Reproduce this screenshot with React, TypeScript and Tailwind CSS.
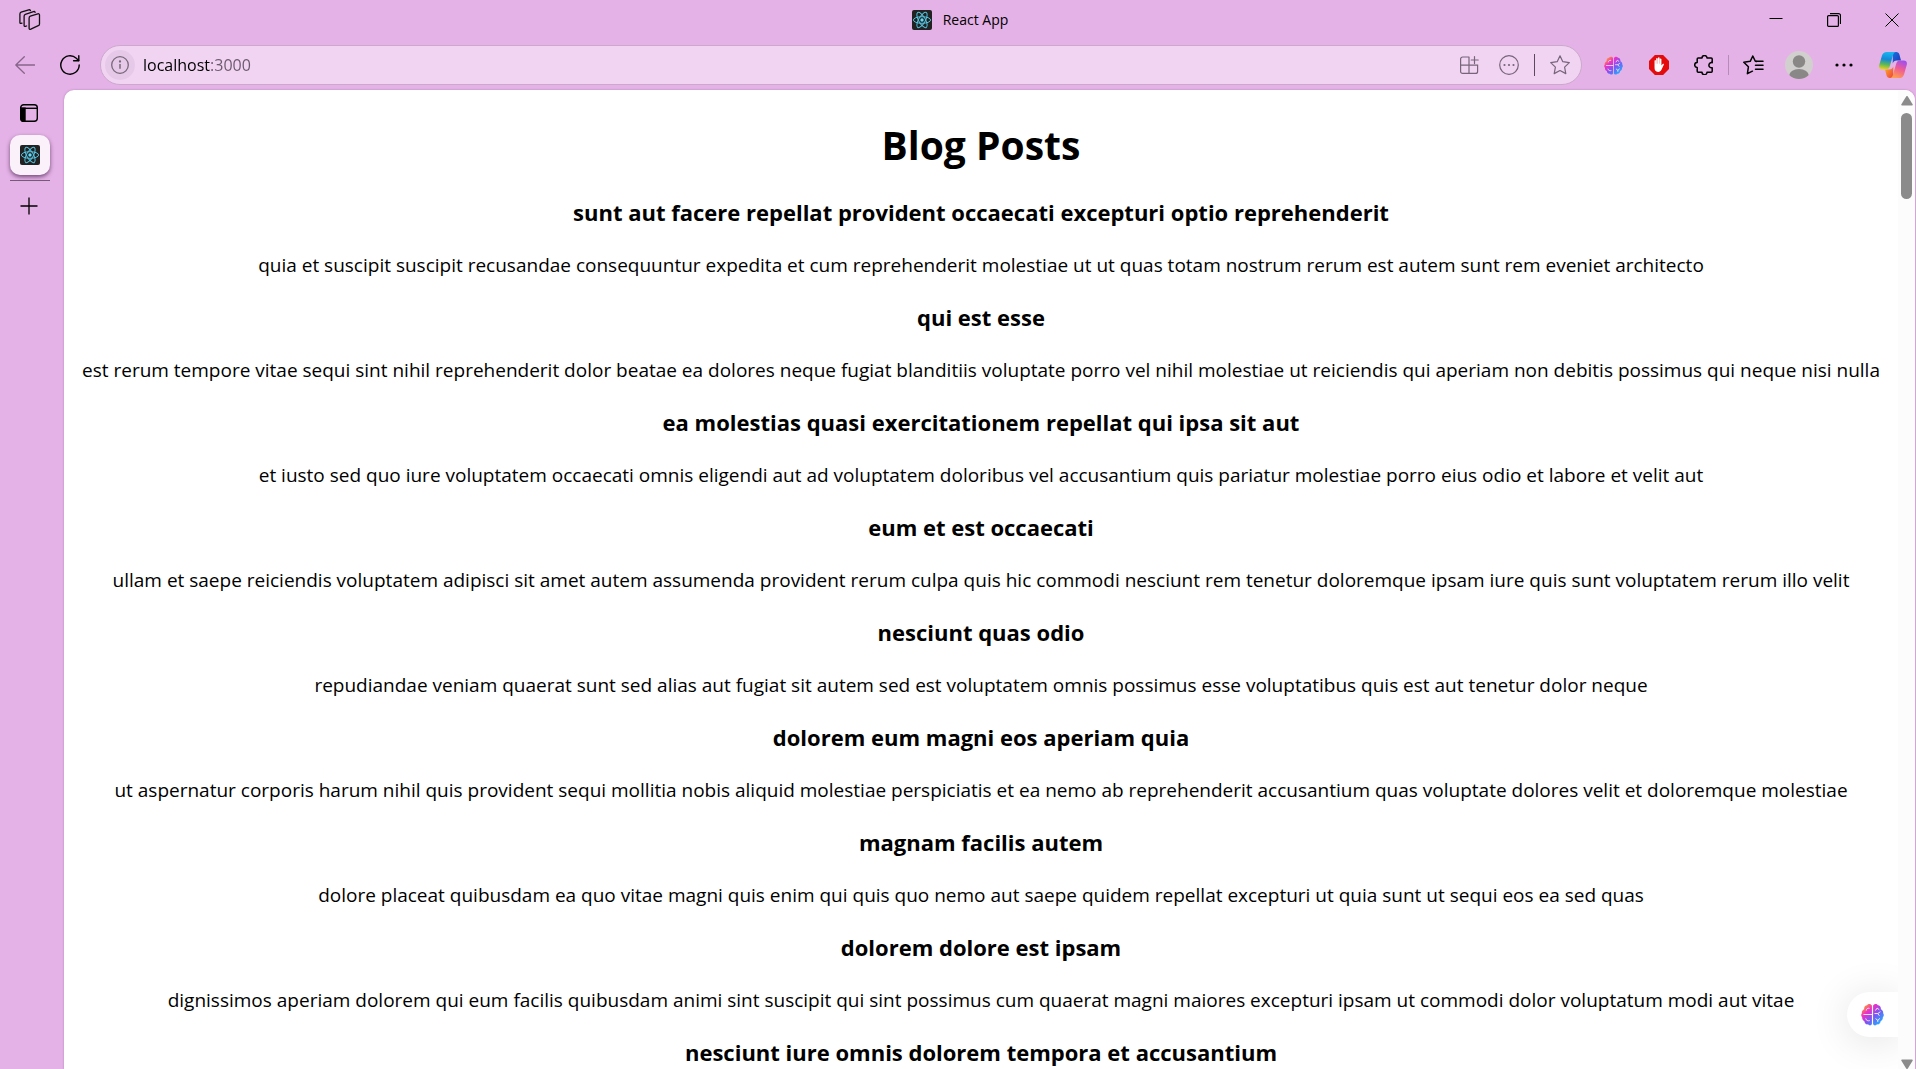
import React from "react";

const posts = [
  { title: "sunt aut facere repellat provident occaecati excepturi optio reprehenderit", body: "quia et suscipit suscipit recusandae consequuntur expedita et cum reprehenderit molestiae ut ut quas totam nostrum rerum est autem sunt rem eveniet architecto" },
  { title: "qui est esse", body: "est rerum tempore vitae sequi sint nihil reprehenderit dolor beatae ea dolores neque fugiat blanditiis voluptate porro vel nihil molestiae ut reiciendis qui aperiam non debitis possimus qui neque nisi nulla" },
  { title: "ea molestias quasi exercitationem repellat qui ipsa sit aut", body: "et iusto sed quo iure voluptatem occaecati omnis eligendi aut ad voluptatem doloribus vel accusantium quis pariatur molestiae porro eius odio et labore et velit aut" },
  { title: "eum et est occaecati", body: "ullam et saepe reiciendis voluptatem adipisci sit amet autem assumenda provident rerum culpa quis hic commodi nesciunt rem tenetur doloremque ipsam iure quis sunt voluptatem rerum illo velit" },
  { title: "nesciunt quas odio", body: "repudiandae veniam quaerat sunt sed alias aut fugiat sit autem sed est voluptatem omnis possimus esse voluptatibus quis est aut tenetur dolor neque" },
  { title: "dolorem eum magni eos aperiam quia", body: "ut aspernatur corporis harum nihil quis provident sequi mollitia nobis aliquid molestiae perspiciatis et ea nemo ab reprehenderit accusantium quas voluptate dolores velit et doloremque molestiae" },
  { title: "magnam facilis autem", body: "dolore placeat quibusdam ea quo vitae magni quis enim qui quis quo nemo aut saepe quidem repellat excepturi ut quia sunt ut sequi eos ea sed quas" },
  { title: "dolorem dolore est ipsam", body: "dignissimos aperiam dolorem qui eum facilis quibusdam animi sint suscipit qui sint possimus cum quaerat magni maiores excepturi ipsam ut commodi dolor voluptatum modi aut vitae" },
  { title: "nesciunt iure omnis dolorem tempora et accusantium", body: "" },
];

function ReactLogo() {
  return (
    <svg viewBox="0 0 20 20" className="size-5 shrink-0" aria-hidden="true">
      <rect width="20" height="20" rx="2" fill="#222222" />
      <g fill="none" stroke="#53c1de" strokeWidth="1">
        <ellipse cx="10" cy="10" rx="8.6" ry="3.3" />
        <ellipse cx="10" cy="10" rx="8.6" ry="3.3" transform="rotate(60 10 10)" />
        <ellipse cx="10" cy="10" rx="8.6" ry="3.3" transform="rotate(120 10 10)" />
      </g>
      <circle cx="10" cy="10" r="1.7" fill="#61dafb" />
    </svg>
  );
}

function Brain({ id, className }: { id: string; className: string }) {
  return (
    <svg viewBox="0 0 24 24" className={className} aria-hidden="true">
      <defs>
        <linearGradient id={id} gradientUnits="userSpaceOnUse" x1="3" y1="2" x2="21" y2="21">
          <stop offset="0" stopColor="#ffa31a" />
          <stop offset="0.3" stopColor="#ee2fc8" />
          <stop offset="0.6" stopColor="#7d55f2" />
          <stop offset="1" stopColor="#1fb0ff" />
        </linearGradient>
      </defs>
      <g fill={`url(#${id})`}>
        <path d="M11.4 2.6C10.4.6 7.4.4 6.300 2.300 4.200 2.400 2.800 4.500 3.400 6.600 1.500 7.400.6 9 .9 10.700-.2 12 0 13.800 1.200 14.800 1.100 16.800 1.900 18.300 3.500 19 3.800 21.300 5.200 22.600 7.200 22.300 8.600 24 10.800 23.700 11.400 22Z" />
        <path d="M12.6 2.6C13.6.6 16.6.4 17.700 2.300 19.800 2.400 21.200 4.500 20.600 6.600 22.500 7.400 23.400 9 23.100 10.700 24.200 12 24 13.800 22.800 14.800 22.900 16.800 22.100 18.300 20.500 19 20.200 21.300 18.800 22.600 16.800 22.300 15.400 24 13.200 23.700 12.600 22Z" />
      </g>
      <g fill="none" stroke="#f8e6fb" strokeWidth="1" strokeLinecap="round">
        <path d="M3 12h8.400M5.500 7.500c.2-1.600 1.400-2.400 3-2M5 16.500c.4 1.700 2 2.500 3.800 2" />
        <path d="M15.300 7.500l1.500-2.200 2 1.500M14.500 11h3l2.500-1.700M17.500 11l1.500 2M15.500 16.500l2 1.600 2-1.800M17.500 18v1.500" />
      </g>
    </svg>
  );
}

function Copilot() {
  return (
    <svg viewBox="0 0 28 26" className="h-[26px] w-7" aria-hidden="true">
      <defs>
        <linearGradient id="cpLeft" x1="0.4" y1="0" x2="0.25" y2="1">
          <stop offset="0" stopColor="#19b5ee" />
          <stop offset="0.4" stopColor="#1489d8" />
          <stop offset="0.7" stopColor="#5cb85a" />
          <stop offset="1" stopColor="#f6d312" />
        </linearGradient>
        <linearGradient id="cpTop" x1="0" y1="0" x2="1" y2="1">
          <stop offset="0" stopColor="#1c6fe0" />
          <stop offset="1" stopColor="#1b37b8" />
        </linearGradient>
        <linearGradient id="cpRight" x1="0.7" y1="0" x2="0.3" y2="1">
          <stop offset="0" stopColor="#a04ff0" />
          <stop offset="0.45" stopColor="#ee5c94" />
          <stop offset="1" stopColor="#ffa04e" />
        </linearGradient>
        <linearGradient id="cpBottom" x1="0" y1="0" x2="1" y2="1">
          <stop offset="0" stopColor="#ffb020" />
          <stop offset="1" stopColor="#ee3f3f" />
        </linearGradient>
      </defs>
      <path d="M14 0h3.200c1.800 0 2.800 1 3.300 2.700L22 8.400h-4c-2.500 0-3.600 1-4.300 3z" fill="url(#cpTop)" />
      <path d="M14 26h-3.200c-1.800 0-2.800-1-3.300-2.700L6 17.600h4c2.500 0 3.600-1 4.300-3z" fill="url(#cpBottom)" />
      <path d="M7.800 0H17c-1.600.2-2.400 1.300-2.900 3l-3.300 11.300c-.7 2.200-1.700 3.300-4 3.300H3.300C.8 17.600-.4 15.800.2 13.300L3 3.600C3.700 1.200 5.300 0 7.800 0z" fill="url(#cpLeft)" />
      <path d="M20.200 26H11c1.600-.2 2.400-1.300 2.900-3l3.300-11.300C17.900 9.500 18.900 8.400 21.200 8.400h3.500c2.500 0 3.700 1.800 3.100 4.300L25 22.400c-.7 2.400-2.300 3.600-4.800 3.600z" fill="url(#cpRight)" />
    </svg>
  );
}

function IconButton({ label, className = "", children }: { label: string; className?: string; children: React.ReactNode }) {
  return (
    <button type="button" aria-label={label} className={`flex shrink-0 items-center justify-center ${className}`}>
      {children}
    </button>
  );
}

function TitleBar() {
  return (
    <header className="grid h-10 shrink-0 grid-cols-[1fr_auto_1fr] items-center">
      <IconButton label="Workspaces" className="ml-4 size-7">
        <svg viewBox="0 0 22 22" className="size-[22px]" fill="none" stroke="#111" strokeWidth="1.300" strokeLinejoin="round" strokeLinecap="round">
          <path d="M11.300 7.200l7.500-2.400c1-.3 1.700.2 1.700 1.200v9c0 .9-.4 1.400-1.200 1.700l-7.500 3.500c-1 .4-1.700 0-1.700-1V9.200c0-1 .4-1.700 1.200-2z" />
          <path d="M7.600 17l-1.200.4c-.8.2-1.300-.2-1.300-1V7.200c0-1 .4-1.600 1.200-1.900L14.500 2.600c.8-.2 1.400.1 1.600.8" />
          <path d="M3 14.200l-1 .2c-.7.100-1.100-.3-1.100-1V5c0-1 .4-1.600 1.200-1.900L9.700.8c.8-.2 1.400.1 1.700.8" />
        </svg>
      </IconButton>
      <div className="flex items-center gap-[11px] pl-1 text-[14px] leading-5">
        <ReactLogo />
        <span>React App</span>
      </div>
      <div className="flex justify-end gap-[10px]">
        <IconButton label="Minimize" className="h-10 w-12">
          <svg viewBox="0 0 14 14" className="size-3.5" fill="none" stroke="#000"><path d="M.5 5.500h13" /></svg>
        </IconButton>
        <IconButton label="Restore" className="h-10 w-12">
          <svg viewBox="0 0 14 14" className="size-3.5" fill="none" stroke="#000" strokeWidth="1.200">
            <rect x=".6" y="2.600" width="10.800" height="10.800" rx="1" />
            <path d="M3 .6h8.500a2 2 0 0 1 2 2V11" />
          </svg>
        </IconButton>
        <IconButton label="Close" className="h-10 w-12">
          <svg viewBox="0 0 14 14" className="size-3.5" fill="none" stroke="#000"><path d="M.5.5l13 13M13.500.5l-13 13" /></svg>
        </IconButton>
      </div>
    </header>
  );
}

function Toolbar() {
  return (
    <div className="flex h-[50px] shrink-0 items-center">
      <IconButton label="Back" className="w-[50px]">
        <svg viewBox="0 0 20 18" className="h-[18px] w-5" fill="none" stroke="#87658a" strokeWidth="1.300" strokeLinecap="round" strokeLinejoin="round"><path d="M19.500 9H.8M9.300.7L.8 9l8.500 8.300" /></svg>
      </IconButton>
      <IconButton label="Refresh" className="mr-[10px] w-10">
        <svg viewBox="0 0 20 20" className="size-5" fill="none" stroke="#000" strokeWidth="1.400" strokeLinecap="round" strokeLinejoin="round">
          <path d="M19.200 10a9.200 9.200 0 1 1-2.900-6.700L18.600 5.500" />
          <path d="M18.800.8v4.900h-5.200" />
        </svg>
      </IconButton>
      <div className="flex h-10 min-w-0 flex-1 items-center rounded-full border border-[#cba9cd] bg-[#f1d4f2] pl-1 pr-px">
        <IconButton label="Site information" className="size-[30px] rounded-full bg-[#e6c9e8]">
          <svg viewBox="0 0 18 18" className="size-[18px]" fill="none" stroke="#776878" strokeWidth="1.300">
            <circle cx="9" cy="9" r="8.300" /><path d="M9 8v4.800" strokeWidth="1.500" /><circle cx="9" cy="5.500" r=".5" fill="#776878" />
          </svg>
        </IconButton>
        <input
          aria-label="Address"
          defaultValue="localhost:3000"
          className="ml-2 min-w-0 flex-1 bg-[linear-gradient(90deg,#000_68px,#6a586b_68px)] bg-clip-text text-[16px] leading-6 text-transparent outline-none"
        />
        <IconButton label="App available" className="w-10">
          <svg viewBox="0 0 19 18" className="h-[18px] w-[19px]" fill="none" stroke="#77647a" strokeWidth="1.200" strokeLinecap="round">
            <path d="M9 1H2.600A2 2 0 0 0 .6 3v12.400a2 2 0 0 0 2 2h13a2 2 0 0 0 2-2V9.200H.6M9 1v16.400" />
            <path d="M14.500.6v7M11.200 4h7" />
          </svg>
        </IconButton>
        <IconButton label="Page actions" className="w-10">
          <svg viewBox="0 0 20 20" className="size-5" fill="none" stroke="#77647a" strokeWidth="1.200">
            <circle cx="10" cy="10" r="9.300" />
            <g fill="#77647a" stroke="none"><circle cx="5.500" cy="10" r="1.100" /><circle cx="10" cy="10" r="1.100" /><circle cx="14.500" cy="10" r="1.100" /></g>
          </svg>
        </IconButton>
        <div className="mx-[5px] h-[22px] w-px bg-[#5a4a5c]" />
        <IconButton label="Add to favorites" className="w-10">
          <svg viewBox="0 0 20 20" className="size-5" fill="none" stroke="#77647a" strokeWidth="1.200" strokeLinejoin="round">
            <path d="M10 .8l2.800 5.900 6.500.9-4.700 4.500 1.200 6.500L10 15.500l-5.800 3.100 1.200-6.500L.7 7.600l6.500-.9z" />
          </svg>
        </IconButton>
      </div>
      <div className="ml-[9px] flex items-center">
        <IconButton label="Brain extension" className="w-[45px]"><Brain id="brainSmall" className="size-[19px]" /></IconButton>
        <IconButton label="Ad blocker" className="w-[45px]">
          <svg viewBox="0 0 20 20" className="size-5">
            <path d="M5.900 0h8.200L20 5.900v8.200L14.100 20H5.900L0 14.100V5.900z" fill="#e30b0b" />
            <path transform="translate(-1.500 -.4) scale(1.080 1.030)" d="M6.500 6.100c0-1 1.300-1 1.300 0V9h.2V4.100c0-1.100 1.500-1.100 1.500 0v4.700h.2V3.400c0-1.100 1.500-1.100 1.500 0v5.400h.2V4.600c0-1.100 1.500-1.100 1.500 0v6l1-1.300c.7-.7 1.600-.2 1.200.6l-2.200 4.800c-.7 1.400-1.500 2.100-3.100 2.100-2.300 0-3.300-1.500-3.300-4z" fill="#fff" />
          </svg>
        </IconButton>
        <IconButton label="Extensions" className="w-[45px]">
          <svg viewBox="0 0 20 20" className="size-5" fill="none" stroke="#000" strokeWidth="1.500" strokeLinejoin="round">
            <path d="M4.200 3H8a2.500 2.500 0 0 1 5 0h4.200a1 1 0 0 1 1 1v3.700a2.600 2.600 0 1 0 0 5V16.200a1 1 0 0 1-1 1H13a2.500 2.500 0 0 1-5 0H4.200a1 1 0 0 1-1-1v-3.700a2.500 2.500 0 0 1 0-5V4a1 1 0 0 1 1-1z" />
          </svg>
        </IconButton>
        <div className="mx-0.5 h-5 w-px bg-[#b48cb7]" />
        <IconButton label="Favorites" className="w-[45px]">
          <svg viewBox="0 0 21 20" className="h-5 w-[21px]" fill="none" stroke="#000" strokeWidth="1.500" strokeLinejoin="round" strokeLinecap="round">
            <path d="M13.600 6.500l-1.300-.2L9.800 1 7.200 6.300.8 7.300l4.600 4.500-1 6.900 5-2.500" />
            <path d="M13 6.300h7M12.500 10.300h7.500M12.500 14.300h7.500" />
          </svg>
        </IconButton>
        <IconButton label="Profile" className="w-[45px]">
          <svg viewBox="0 0 28 28" className="size-7">
            <defs><clipPath id="avatar"><circle cx="14" cy="14" r="14" /></clipPath></defs>
            <g clipPath="url(#avatar)"><rect width="28" height="28" fill="#d2d0ce" /><circle cx="14" cy="10.500" r="6.200" fill="#8a8886" /><ellipse cx="14" cy="25" rx="10" ry="7" fill="#8a8886" /></g>
          </svg>
        </IconButton>
        <IconButton label="Settings and more" className="w-[45px]">
          <svg viewBox="0 0 18 4" className="h-1 w-[18px]"><circle cx="2" cy="2" r="1.600" /><circle cx="9" cy="2" r="1.600" /><circle cx="16" cy="2" r="1.600" /></svg>
        </IconButton>
        <IconButton label="Copilot" className="w-[50px] pl-[3px]"><Copilot /></IconButton>
      </div>
    </div>
  );
}

function TabStrip() {
  return (
    <nav aria-label="Tabs" className="flex w-16 shrink-0 flex-col items-start pl-2.5">
      <IconButton label="Vertical tabs" className="mt-[13px] h-5 w-[38px]">
        <svg viewBox="0 0 18 18" className="size-[18px]" fill="none" stroke="#000" strokeWidth="1.400">
          <rect x=".7" y=".7" width="16.600" height="16.600" rx="3" />
          <path d="M.7 4.300h16.600" />
          <path d="M.7 4.300H5v13H3a2 2 0 0 1-2-2z" fill="#000" />
        </svg>
      </IconButton>
      <IconButton label="React App" className="mt-3 size-10 rounded-[10px] bg-[#faf1fb] shadow-[0_2px_4px_rgba(60,20,65,0.65)]"><ReactLogo /></IconButton>
      <div className="mt-[5px] h-px w-10 bg-[#765a78]" />
      <IconButton label="New tab" className="mt-4 h-[18px] w-[38px]">
        <svg viewBox="0 0 18 18" className="size-[18px]" fill="none" stroke="#000" strokeWidth="1.300"><path d="M9 .5v17M.5 9h17" /></svg>
      </IconButton>
    </nav>
  );
}

function ScrollBar() {
  return (
    <div className="flex w-[17px] shrink-0 flex-col items-center bg-[#fcfcfc] pt-1.5">
      <svg viewBox="0 0 12 10" className="h-2.5 w-3" fill="#8b8b8b"><path d="M5 .7a1.200 1.200 0 0 1 2 0l4.600 7.500c.4.700.1 1.300-.7 1.300H1.100c-.8 0-1.100-.6-.7-1.300z" /></svg>
      <div className="mt-[7px] h-[86px] w-[11px] rounded-full bg-[#8b8b8b]" />
      <svg viewBox="0 0 12 10" className="mt-auto h-2.5 w-3" fill="#8b8b8b"><path d="M5 9.300a1.200 1.200 0 0 0 2 0l4.600-7.500c.4-.7.1-1.300-.7-1.300H1.100C.3.500 0 1.100.4 1.800z" /></svg>
    </div>
  );
}

export default function App() {
  return (
    <div className="flex h-screen flex-col overflow-hidden bg-[#e4b2e6] font-['Open_Sans','Noto_Sans',sans-serif] text-black">
      <TitleBar />
      <Toolbar />
      <div className="flex min-h-0 flex-1">
        <TabStrip />
        <div className="relative mr-px flex min-w-0 flex-1 overflow-hidden rounded-t-[10px] bg-white shadow-[0_0_2px_rgba(120,70,125,0.5)]">
          <main className="min-w-0 flex-1 overflow-hidden px-2.5 text-center">
            <h1 className="mt-7 mb-0.5 text-[39px] leading-[54px] font-bold">Blog Posts</h1>
            {posts.map((post) => (
              <article key={post.title}>
                <h3 className="pt-[23px] text-[22px] leading-[31px] font-bold">{post.title}</h3>
                <p className="mt-6 text-[19px] leading-[27px]">{post.body}</p>
              </article>
            ))}
          </main>
          <ScrollBar />
          <button type="button" aria-label="Open assistant" className="absolute right-[17px] bottom-8 flex h-[45px] w-[51px] items-center rounded-l-full bg-white pl-3.5 shadow-[0_4px_40px_rgba(0,0,0,0.12)] [clip-path:inset(-60px_0_-60px_-60px)]">
            <Brain id="brainLarge" className="size-[23px]" />
          </button>
        </div>
      </div>
    </div>
  );
}
